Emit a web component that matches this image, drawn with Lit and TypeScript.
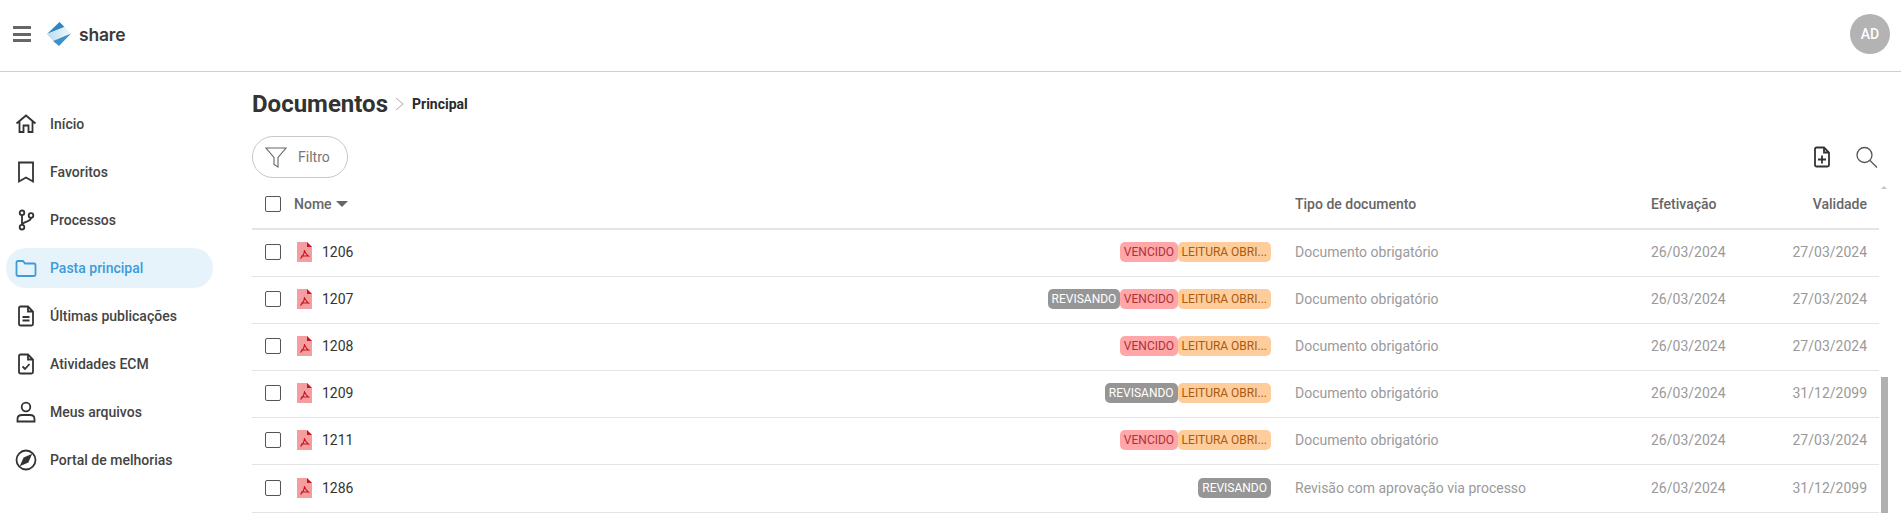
import { LitElement, html, css, svg } from "lit";
import { customElement } from "lit/decorators.js";

const nav: [string, any, boolean?][] = [
  ["Início", svg`<path d="M2.500 11.500 12 3.500l9.500 8M5.500 9.500V20h4v-6.500h5V20h4V9.500"/>`],
  ["Favoritos", svg`<path d="M5 2.500h14v19l-7-4-7 4z"/>`],
  ["Processos", svg`<circle cx="8" cy="4.800" r="2.300"/><circle cx="8" cy="19.200" r="2.300"/><circle cx="17" cy="7.500" r="2.300"/><path d="M8 7v10M17 9.800c0 4.500-7.500 3-9 7"/>`],
  ["Pasta principal", svg`<path d="M2.500 6.500A1.500 1.500 0 0 1 4 5h5l2 2.500h9A1.500 1.500 0 0 1 21.500 9v9.500A1.500 1.500 0 0 1 20 20H4a1.500 1.500 0 0 1-1.500-1.500z"/>`, true],
  ["Últimas publicações", svg`<path d="M5 4A1.500 1.500 0 0 1 6.500 2.500H14L19 7.500V20a1.500 1.500 0 0 1-1.500 1.500h-11A1.500 1.500 0 0 1 5 20zM14 2.500v5h5M8.500 13h7M8.500 16.500h7"/>`],
  ["Atividades ECM", svg`<path d="M5 4A1.500 1.500 0 0 1 6.500 2.500H14L19 7.500V20a1.500 1.500 0 0 1-1.500 1.500h-11A1.500 1.500 0 0 1 5 20zM14 2.500v5h5M8.500 14.500l2.500 2.500 4.500-5"/>`],
  ["Meus arquivos", svg`<circle cx="12" cy="7" r="4.300"/><path d="M3.500 19c0-2.500 2-4 4.500-4h8c2.500 0 4.500 1.500 4.500 4v2.500h-17z"/>`],
  ["Portal de melhorias", svg`<circle cx="12" cy="12" r="9.500"/><path d="m16.500 7.500-2.800 6.200-6.200 2.800 2.800-6.200z" fill="currentColor"/>`],
];

type Row = [string, string[], string, string, string];
const rows: Row[] = [
  ["1206", ["v", "l"], "Documento obrigatório", "26/03/2024", "27/03/2024"],
  ["1207", ["r", "v", "l"], "Documento obrigatório", "26/03/2024", "27/03/2024"],
  ["1208", ["v", "l"], "Documento obrigatório", "26/03/2024", "27/03/2024"],
  ["1209", ["r", "l"], "Documento obrigatório", "26/03/2024", "31/12/2099"],
  ["1211", ["v", "l"], "Documento obrigatório", "26/03/2024", "27/03/2024"],
  ["1286", ["r"], "Revisão com aprovação via processo", "26/03/2024", "31/12/2099"],
];
const tagText: Record<string, string> = { v: "VENCIDO", l: "LEITURA OBRI...", r: "REVISANDO" };

@customElement("app-root")
export class AppRoot extends LitElement {
  static styles = css`
    :host { display: block; height: 513px; overflow: hidden; position: relative; background: #fff;
      font-family: Roboto, "Liberation Sans", sans-serif; color: #333; }
    header { height: 71px; border-bottom: 1px solid #cfcfcf; box-sizing: content-box; display: flex; align-items: center; padding: 0 11px 0 13px; }
    .bar { display: flex; align-items: center; width: 100%; margin-top: -3px; }
    .burger { width: 18px; height: 16px; margin-right: 16px; display: flex; flex-direction: column; justify-content: space-between; }
    .burger i { display: block; height: 3px; background: #666; }
    .logo { width: 24px; height: 24px; margin-right: 8px; }
    .brand { font-family: Inter, Roboto, sans-serif; font-weight: 600; font-size: 17.500px; color: #3a3a3a; letter-spacing: -0.2px; flex: 1; }
    .avatar { width: 40px; height: 40px; border-radius: 50%; background: #b3b3b3; color: #fff; font-size: 14px; font-weight: 500; display: flex; align-items: center; justify-content: center; }
    .main { display: flex; }
    aside { width: 252px; flex: none; padding: 32px 0 0 6px; box-sizing: border-box; display: flex; flex-direction: column; gap: 8px; }
    .item { width: 207px; height: 40px; border-radius: 20px; display: flex; align-items: center; padding-left: 8px; box-sizing: border-box; font-size: 14px; font-weight: 500; color: #444; }
    .item svg { width: 24px; height: 24px; margin-right: 12px; fill: none; stroke: #333; stroke-width: 1.800; flex: none; color: #333; }
    .item.on { background: #e6f3fb; color: #3d9bd9; }
    .item.on svg { stroke: #3d9bd9; }
    .content { flex: 1; padding: 16px 22px 0 0; min-width: 0; }
    .crumbs { display: flex; align-items: center; height: 32px; }
    h1 { margin: 0; font-size: 24px; font-weight: 700; color: #333; }
    .crumbs svg { width: 12px; height: 14px; margin: 0 6px 0 6px; fill: none; stroke: #aaa; stroke-width: 1; }
    .crumbs span { font-size: 14px; font-weight: 700; color: #2a2a2a; }
    .tools { display: flex; align-items: center; justify-content: space-between; margin-top: 16px; }
    .filter { width: 96px; height: 42px; box-sizing: border-box; border: 1px solid #c8c8c8; border-radius: 21px; display: flex; align-items: center; padding-left: 12px; gap: 11px; font-size: 14px; color: #777; }
    .filter svg { width: 22px; height: 24px; fill: none; stroke: #666; stroke-width: 1.100; }
    .acts { display: flex; gap: 20px; padding-right: 1px; align-items: center; }
    .acts svg { width: 24px; height: 24px; fill: none; stroke: #333; stroke-width: 1.800; display: block; }
    .acts svg.s { stroke: #555; stroke-width: 1.300; }
    .row { display: grid; grid-template-columns: 29px 28px 1fr 24px 356px 141px 75px; align-items: center; padding: 0 12px 2px 13px; border-bottom: 1px solid #e4e4e4; height: 47.100px; box-sizing: border-box; font-size: 14px; color: #9a9a9a; }
    .row.head { height: 52px; padding: 1px 12px 0 13px; border-bottom: 2px solid #e4e4e4; font-weight: 500; color: #666; }
    .cb { width: 16px; height: 16px; border: 1.500px solid #555; border-radius: 2px; box-sizing: border-box; }
    .r { text-align: right; }
    .nome { grid-column: 2 / 4; display: flex; align-items: center; gap: 4px; }
    .caret { width: 0; height: 0; border: 6px solid transparent; border-top: 6px solid #666; border-bottom: 0; }
    .pdf { width: 15px; height: 20px; display: block; margin-left: 3px; }
    .nm { display: flex; align-items: center; justify-content: space-between; color: #333; }
    .tags { display: flex; justify-content: flex-end; }
    .tag { height: 20px; line-height: 20px; border-radius: 5px; padding: 0 4px; font-size: 12px; white-space: nowrap; }
    .tag.v { background: #ffa6a9; color: #ad3238; padding: 0 3.500px; }
    .tag.l { background: #ffcd9b; color: #a85a10; }
    .tag.r { background: #969696; color: #fff; }
    .scroll-up { position: absolute; left: 1881px; top: 186px; width: 0; height: 0; border: 3px solid transparent; border-bottom: 3px solid #c4c4c4; border-top: 0; }
    .scroll { position: absolute; left: 1881px; top: 377px; width: 7px; height: 136px; background: #b0b0b0; }
  `;

  render() {
    return html`
      <header>
        <div class="bar">
        <div class="burger"><i></i><i></i><i></i></div>
        <svg class="logo" viewBox="0 0 24 24">
          <defs><linearGradient id="g" x1="0" y1="0" x2="1" y2="0"><stop offset="0" stop-color="#bcdcf0"/><stop offset="1" stop-color="#f0f8fc"/></linearGradient></defs>
          <path d="M12.500 0 17.500 5 0 12z" fill="#2f86c4"/>
          <path d="M0 12 17.500 5 24 11.500 6 19z" fill="url(#g)"/>
          <path d="M24 11.500 12 24 6 19z" fill="#3b8fcb"/>
        </svg>
        <div class="brand">share</div>
        <div class="avatar">AD</div>
        </div>
      </header>
      <div class="main">
        <aside>
          ${nav.map(([t, ic, on]) => html`<div class="item ${on ? "on" : ""}"><svg viewBox="0 0 24 24">${ic}</svg>${t}</div>`)}
        </aside>
        <div class="content">
          <div class="crumbs">
            <h1>Documentos</h1>
            <svg viewBox="0 0 12 14"><path d="m2 1 7 6-7 6"/></svg>
            <span>Principal</span>
          </div>
          <div class="tools">
            <div class="filter">
              <svg viewBox="0 0 22 24"><path d="M1 3h20l-8 9.500V22l-4-2.500v-7z"/></svg>Filtro
            </div>
            <div class="acts">
              <svg viewBox="0 0 24 24"><path d="M5 4A1.500 1.500 0 0 1 6.500 2.500H14L19 7.500V20a1.500 1.500 0 0 1-1.500 1.500h-11A1.500 1.500 0 0 1 5 20zM14 2.500v5h5M12 10.500v8M8 14.500h8"/></svg>
              <svg class="s" viewBox="0 0 24 24"><circle cx="10.500" cy="10" r="7.500"/><path d="m16 15.500 7 7"/></svg>
            </div>
          </div>
          <div class="row head">
            <div class="cb"></div>
            <div class="nome">Nome <span class="caret"></span></div>
            <div></div>
            <div>Tipo de documento</div>
            <div>Efetivação</div>
            <div class="r">Validade</div>
          </div>
          ${rows.map(r => html`
            <div class="row">
              <div class="cb"></div>
              <svg class="pdf" viewBox="0 0 15 20">
                <path d="M0 0h10l5 5v15H0z" fill="#f59ea2"/>
                <path d="M10 0v5h5z" fill="#c8161d"/>
                <path d="M7.500 8c0 3-2 6.500-4 8.500M7.500 8c.5 3 3 6 5 6.500M4 14h7" fill="none" stroke="#c8161d" stroke-width="1.100"/>
              </svg>
              <div class="nm"><span>${r[0]}</span><div class="tags">${r[1].map(t => html`<span class="tag ${t}">${tagText[t]}</span>`)}</div></div>
              <div></div>
              <div>${r[2]}</div>
              <div>${r[3]}</div>
              <div class="r">${r[4]}</div>
            </div>`)}
        </div>
      </div>
      <div class="scroll-up"></div>
      <div class="scroll"></div>
    `;
  }
}
